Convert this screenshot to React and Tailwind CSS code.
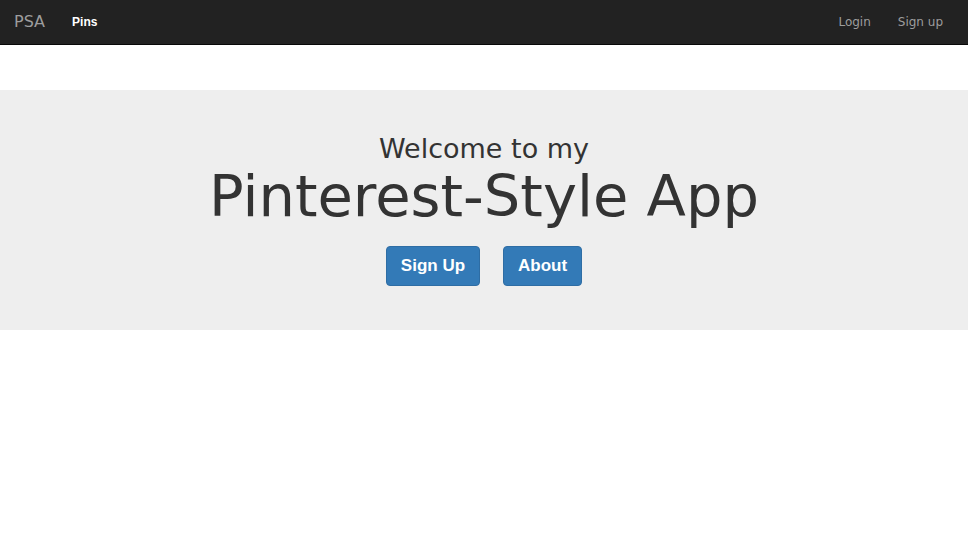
import React from 'react'

const App = () => {
  return (
    <div className="min-h-screen bg-white font-['DejaVu_Sans',Verdana,sans-serif]">
      {/* Navbar */}
      <nav className="h-[45px] bg-[#222222] border-b border-[#080808] flex items-center justify-between px-[14px]">
        <div className="flex items-center">
          <span className="text-[16px] text-[#9d9d9d] leading-none">PSA</span>
          <span className="ml-[27px] text-[12px] font-bold text-white leading-none font-['Liberation_Sans',Arial,sans-serif]">Pins</span>
        </div>
        <div className="flex items-center gap-[27px] pr-[11px] text-[12px] text-[#9d9d9d] leading-none">
          <span>Login</span>
          <span>Sign up</span>
        </div>
      </nav>

      {/* Jumbotron */}
      <div className="mt-[45px] bg-[#eeeeee] h-[240px] flex flex-col items-center pt-[45px] text-[#333333]">
        <p className="text-[27px] leading-none">Welcome to my</p>
        <h1 className="mt-[6px] text-[57.5px] leading-none">Pinterest-Style App</h1>
        <div className="mt-[20px] flex gap-[23px] font-['Liberation_Sans',Arial,sans-serif]">
          <button className="h-[40px] px-[14px] bg-[#337ab7] border border-[#2e6da4] rounded-[4px] text-white text-[17px] font-bold">
            Sign Up
          </button>
          <button className="h-[40px] px-[14px] bg-[#337ab7] border border-[#2e6da4] rounded-[4px] text-white text-[17px] font-bold">
            About
          </button>
        </div>
      </div>
    </div>
  )
}

export default App
